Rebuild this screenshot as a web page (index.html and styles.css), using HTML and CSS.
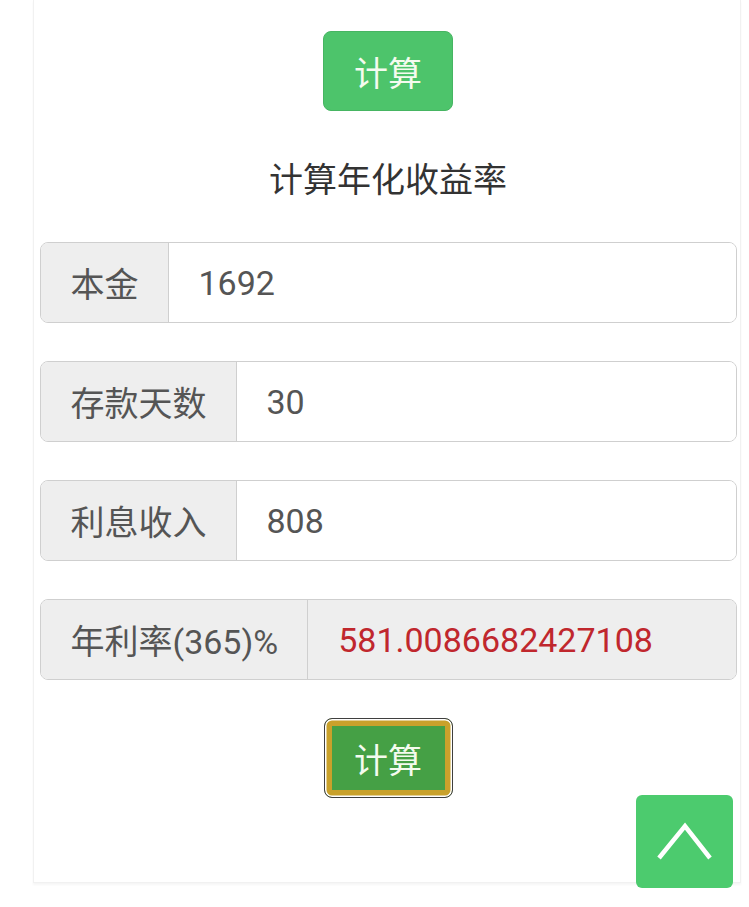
FILE: index.html
```html
<!DOCTYPE html>
<html lang="zh-CN">
<head>
    <meta charset="UTF-8">
    <meta name="viewport" content="width=device-width, initial-scale=1.0">
    <title>计算年化收益率</title>
    <link rel="stylesheet" href="styles.css">
</head>
<body>
    <div class="panel">
        <button class="btn-calc" type="button">计算</button>
        <h3 class="calc-title">计算年化收益率</h3>

        <div class="input-group">
            <span class="addon">本金</span>
            <input class="form-control" type="text" value="1692">
        </div>
        <div class="input-group">
            <span class="addon">存款天数</span>
            <input class="form-control" type="text" value="30">
        </div>
        <div class="input-group">
            <span class="addon">利息收入</span>
            <input class="form-control" type="text" value="808">
        </div>
        <div class="input-group">
            <span class="addon">年利率(365)%</span>
            <input class="form-control result" type="text" value="581.0086682427108" readonly>
        </div>

        <button class="btn-calc btn-focus" type="button">计算</button>
    </div>
    <div class="panel-next"></div>

    <!-- back to top -->
    <a class="to-top" href="#">
        <svg width="97" height="93" viewBox="0 0 97 93">
            <polyline points="23,63 49,31 74,63" fill="none" stroke="#fff" stroke-width="4.5"/>
        </svg>
    </a>
</body>
</html>
```

FILE: styles.css
```css
* {
    margin: 0;
    padding: 0;
    box-sizing: border-box;
}

body {
    font-family: Roboto, "Noto Sans CJK SC", sans-serif;
    background-color: #ffffff;
    color: #333;
    height: 907px;
    overflow: hidden;
}

/* Panel */
.panel {
    margin-left: 33px;
    width: 708px;
    padding: 31px 4px 84px 6px;
    border: 1px solid #f1f1f1;
    border-top: none;
    box-shadow: 0 2px 2px rgba(0, 0, 0, 0.04);
    display: flex;
    flex-direction: column;
    align-items: center;
}

.panel-next {
    margin: 24px 8px 0 42px;
    height: 20px;
    border-top: 1px solid #eeeeee;
}

/* Buttons */
.btn-calc {
    width: 130px;
    height: 80px;
    font-family: inherit;
    font-size: 34px;
    color: #f4fbef;
    background-color: #4dc46b;
    border: 1px solid #46b562;
    border-radius: 8px;
    cursor: pointer;
}

.btn-focus {
    margin-top: 38px;
    width: 129px;
    background-color: #45a045;
    border: 1.5px solid #3f3f3f;
    box-shadow: inset 0 0 0 1.5px #ffffff, inset 0 0 0 7px #c9a12b;
}

.calc-title {
    margin: 46px 0 39px;
    font-size: 34px;
    font-weight: normal;
    line-height: 46px;
    color: #333;
}

/* Input groups */
.input-group {
    display: flex;
    width: 697px;
    height: 81px;
    margin-bottom: 38px;
    border: 1.5px solid #cfcfcf;
    border-radius: 8px;
    overflow: hidden;
}

.input-group:last-of-type {
    margin-bottom: 0;
}

.addon {
    display: flex;
    align-items: center;
    padding: 0 29px 0 30px;
    font-size: 34px;
    color: #555;
    background-color: #eeeeee;
    border-right: 1px solid #cfcfcf;
    white-space: nowrap;
}

.form-control {
    flex-grow: 1;
    min-width: 0;
    padding: 0 30px;
    font-family: inherit;
    font-size: 34px;
    color: #555;
    background-color: #fff;
    border: none;
    outline: none;
}

.form-control.result {
    color: #c0272d;
    background-color: #eeeeee;
}

/* Back to top */
.to-top {
    position: fixed;
    right: 16px;
    bottom: 19px;
    width: 97px;
    height: 93px;
    background-color: #4ccb6e;
    border-radius: 6px;
    display: block;
}

.to-top svg {
    display: block;
}
```
